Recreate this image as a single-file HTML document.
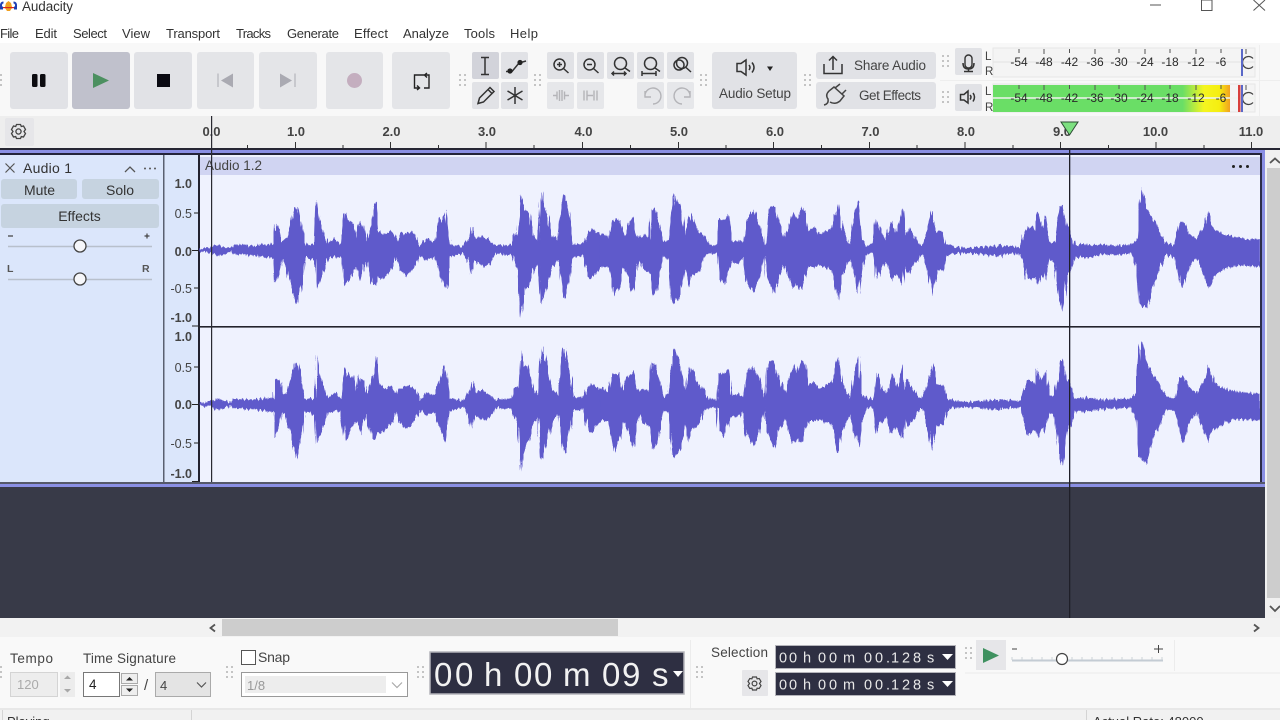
<!DOCTYPE html>
<html><head><meta charset="utf-8"><title>Audacity</title>
<style>
html,body{margin:0;padding:0;background:#fff;width:1280px;height:720px;overflow:hidden}
svg{display:block}
#root{filter:blur(.3px)}
text{font-family:"Liberation Sans",sans-serif;fill:#333}
.mn{font-size:13px;fill:#333}
.rl{font-size:13px;font-weight:bold;fill:#444;text-anchor:middle}
.m{font-size:12px;fill:#2a2a2a;text-anchor:middle}
.v{font-size:12.5px;fill:#444;text-anchor:end}
.b{font-weight:bold}
.ic{fill:none;stroke:#333;stroke-width:1.5}
.dis{fill:none;stroke:#b4b4b8;stroke-width:1.4}
.btn{fill:#e1e2e6}
.t{font-size:13.5px;fill:#444}
</style></head><body>
<svg id="root" width="1280" height="720" viewBox="0 0 1280 720" xmlns="http://www.w3.org/2000/svg">
<defs>
<filter id="jag" filterUnits="userSpaceOnUse" x="190" y="150" width="1080" height="340" color-interpolation-filters="sRGB">
<feTurbulence type="fractalNoise" baseFrequency="0.5 0.015" numOctaves="2" seed="4" result="n"/>
<feDisplacementMap in="SourceGraphic" in2="n" scale="7" xChannelSelector="G" yChannelSelector="R"/>
</filter>
<g id="grip" fill="#c4c4c4"><rect x="0" y="0" width="2" height="2"/><rect x="5" y="0" width="2" height="2"/><rect x="0" y="5" width="2" height="2"/><rect x="5" y="5" width="2" height="2"/><rect x="0" y="10" width="2" height="2"/><rect x="5" y="10" width="2" height="2"/></g>
<g id="wave" fill="#5f5acb" stroke="#5f5acb" stroke-width="2">
<polygon transform="translate(200 170) scale(.33333)" points="0,238 35,232 55,225 75,232 95,236 100,226 160,228 200,224 222,222 226,162 240,175 248,215 262,205 285,115 292,112 305,180 315,225 345,225 350,95 358,150 375,200 385,222 405,205 425,228 435,130 445,155 460,160 470,210 480,160 490,170 500,215 515,170 527,100 535,180 550,195 575,185 590,215 600,195 620,185 645,195 660,230 680,208 705,215 722,150 737,125 750,225 790,230 808,200 813,170 825,205 850,200 870,215 885,228 935,225 942,195 955,190 962,78 975,125 985,125 1000,200 1015,215 1022,100 1027,68 1040,130 1055,195 1075,215 1085,130 1092,72 1105,130 1120,222 1150,220 1165,190 1175,180 1203,195 1203,290 1175,325 1165,320 1150,255 1120,260 1105,340 1092,390 1085,350 1075,270 1055,290 1040,350 1027,405 1022,400 1015,280 1000,300 985,350 975,355 962,440 955,300 942,270 935,255 885,250 870,280 850,290 825,270 813,315 808,280 790,248 750,260 737,352 722,320 705,260 680,270 660,255 645,290 620,315 600,300 590,260 575,295 550,325 535,320 527,345 515,340 500,270 490,290 480,330 470,290 460,300 445,330 435,350 425,262 405,260 385,265 375,290 358,340 350,355 345,270 315,260 305,340 292,402 285,380 262,300 248,262 240,300 226,340 222,262 200,262 160,255 100,252 95,244 75,250 55,258 35,248 0,243"/>
<polygon transform="translate(600 170) scale(.33333)" points="0,200 10,190 25,210 35,155 42,150 58,150 70,205 85,160 100,140 110,195 118,205 130,195 150,205 158,115 168,125 178,165 190,220 205,210 215,120 222,75 240,110 255,205 265,160 272,130 285,165 300,190 312,195 325,225 352,228 358,150 375,150 385,135 395,215 415,210 430,220 440,150 460,122 475,160 495,230 502,140 510,110 522,110 535,155 555,205 570,160 580,125 592,150 605,110 615,125 625,185 640,175 660,195 695,175 715,102 725,170 750,225 760,155 775,95 785,210 800,225 820,225 830,150 845,195 860,210 875,155 890,190 907,120 915,200 925,170 950,215 965,225 985,170 995,122 1010,185 1030,185 1040,225 1060,230 1100,235 1203,228 1203,258 1100,248 1060,250 1040,260 1030,300 1010,300 995,378 985,310 965,250 950,270 925,310 915,280 907,340 890,310 875,325 860,275 845,290 830,325 820,250 800,250 785,295 775,370 760,300 750,265 725,320 715,388 695,300 660,285 640,290 625,290 615,320 605,355 592,340 580,355 570,330 555,280 535,320 522,370 510,340 502,320 495,250 475,330 460,365 440,335 430,260 415,280 395,275 385,300 375,340 358,325 352,250 325,250 312,260 300,300 285,310 272,320 265,350 255,290 240,370 222,400 215,390 205,270 190,255 178,310 168,360 158,375 150,310 130,295 118,270 110,300 100,365 85,320 70,290 58,345 42,380 35,340 25,290 10,290 0,290"/>
<polygon transform="translate(1000 170) scale(.33333)" points="0,228 60,232 72,195 85,170 105,180 112,130 125,175 135,140 148,215 165,215 180,110 188,108 200,170 210,175 225,225 260,222 300,228 395,225 410,205 418,100 425,52 440,115 460,150 480,185 500,220 525,225 540,160 548,155 565,190 590,210 610,175 625,125 640,175 670,195 720,205 780,210 780,290 720,285 670,295 640,320 625,350 610,310 590,260 565,295 548,352 540,340 525,260 500,255 480,290 460,340 440,415 425,405 418,400 410,290 395,250 300,255 260,262 225,260 210,305 200,320 188,425 180,390 165,280 148,265 135,325 125,310 112,340 105,320 85,330 72,285 60,250 0,252"/>
</g>
</defs>

<!-- title bar -->
<rect width="1280" height="720" fill="#fff"/>
<g>
<path d="M1 9V5.5Q1 2.5 3.5 2.5" fill="none" stroke="#1c3fb4" stroke-width="2"/>
<path d="M16 9V5.5Q16 2.5 13.5 2.5" fill="none" stroke="#1c3fb4" stroke-width="2"/>
<path d="M0 6.5h3v3H0zM14 6.5h3v3h-3z" fill="#1c3fb4"/>
<path d="M6 3L8.5 1L11 3L12 7H5z" fill="#f0a020"/><path d="M5 8H12L10 11H7z" fill="#f0a020"/>
<path d="M3 7H14V8.2H3z" fill="#d8261c"/>
</g>
<text x="22" y="11" font-size="13.5" style="fill:#333" textLength="51">Audacity</text>
<path d="M1150 5H1161" stroke="#555" stroke-width="1"/>
<rect x="1201.5" y="0" width="10.5" height="10.5" fill="none" stroke="#555"/>
<path d="M1253.5 0L1265 10.5M1265 0L1253.5 10.5" stroke="#555" fill="none"/>

<!-- menu -->
<g>
<text class="mn" x="0" y="38" textLength="19">File</text>
<text class="mn" x="35" y="38" textLength="22">Edit</text>
<text class="mn" x="73" y="38" textLength="34">Select</text>
<text class="mn" x="122" y="38" textLength="28">View</text>
<text class="mn" x="166" y="38" textLength="54">Transport</text>
<text class="mn" x="236" y="38" textLength="35">Tracks</text>
<text class="mn" x="287" y="38" textLength="52">Generate</text>
<text class="mn" x="354" y="38" textLength="34">Effect</text>
<text class="mn" x="403" y="38" textLength="46">Analyze</text>
<text class="mn" x="464" y="38" textLength="31">Tools</text>
<text class="mn" x="510" y="38" textLength="28">Help</text>
</g>

<!-- toolbar band -->
<rect x="0" y="43" width="1280" height="73" fill="#f8f8f8"/>
<rect x="0" y="116" width="1280" height="33" fill="#eeeeee"/>
<path d="M940 80.500H1280M1259.500 45V116" stroke="#eeeeee"/>

<!-- transport -->
<rect class="btn" x="10" y="52" width="58" height="57" rx="3"/>
<rect x="72" y="52" width="58" height="57" rx="3" fill="#c0c1cc"/>
<rect class="btn" x="134" y="52" width="58" height="57" rx="3"/>
<rect x="197" y="52" width="57" height="57" rx="3" fill="#e4e5e8"/>
<rect x="259" y="52" width="58" height="57" rx="3" fill="#e4e5e8"/>
<rect x="326" y="52" width="57" height="57" rx="3" fill="#e4e5e8"/>
<rect x="392" y="52" width="58" height="57" rx="3" fill="#e4e5e8"/>
<rect x="32" y="74" width="5.5" height="13" rx="1.5" fill="#0c0c10"/><rect x="40" y="74" width="5.5" height="13" rx="1.5" fill="#0c0c10"/>
<path d="M93 73L109 80.500L93 88z" fill="#4c9060"/>
<rect x="157" y="74" width="13" height="13" fill="#0a0a12"/>
<path d="M218 73.500V87" stroke="#aaaab2"/><path d="M233 73.500V87.500L221 80.500z" fill="#aaaab2"/>
<path d="M295 73.500V87" stroke="#aaaab2"/><path d="M280 73.500V87.500L292 80.500z" fill="#aaaab2"/>
<circle cx="354.500" cy="80.500" r="7.500" fill="#c4aebf"/>
<path d="M426 75H414.500V88H419M417 85.500L419.500 88L417 90M417 75H429V88H424M427 73L424.500 75L427 77.500" fill="none" stroke="#222" stroke-width="1.400"/>

<!-- tools -->
<rect x="472" y="52" width="27" height="27" rx="2" fill="#d2d3da"/>
<rect class="btn" x="501" y="52" width="27" height="27" rx="2"/>
<rect class="btn" x="472" y="82" width="27" height="27" rx="2"/>
<rect class="btn" x="501" y="82" width="27" height="27" rx="2"/>
<path d="M481 57.500H489M485 57.500V74.500M481 74.500H489" class="ic"/>
<path d="M506 71.500L512 71.500L519 63L526 61" class="ic" stroke-width="1.300"/><circle cx="510" cy="71" r="2.600" fill="#222"/><circle cx="520" cy="62.500" r="2.600" fill="#222"/>
<path d="M478 103.500L479.500 98L490 87.500L494 91.500L483.500 102zM488 89.500L492 93.500" class="ic"/>
<path d="M515 87V104M507.500 91L522.500 100M507.500 100L522.500 91" class="ic"/>

<!-- zoom etc -->
<g>
<rect class="btn" x="547" y="52" width="27" height="27" rx="2"/><rect class="btn" x="577" y="52" width="27" height="27" rx="2"/><rect class="btn" x="607" y="52" width="27" height="27" rx="2"/><rect class="btn" x="637" y="52" width="27" height="27" rx="2"/><rect class="btn" x="667" y="52" width="27" height="27" rx="2"/>
<rect x="547" y="82" width="27" height="27" rx="2" fill="#e6e7ea"/><rect x="577" y="82" width="27" height="27" rx="2" fill="#e6e7ea"/><rect x="637" y="82" width="27" height="27" rx="2" fill="#e6e7ea"/><rect x="667" y="82" width="27" height="27" rx="2" fill="#e6e7ea"/>
</g>
<g class="ic">
<circle cx="559.500" cy="64.500" r="5.500"/><path d="M563.500 68.500L568.500 73M557 64.500H562M559.500 62V67"/>
<circle cx="589.500" cy="64.500" r="5.500"/><path d="M593.500 68.500L598.500 73M587 64.500H592"/>
<circle cx="620.500" cy="63.500" r="6"/><path d="M625 68L630 71.500M612 73.500H626M614 71.500L612 73.500L614 75.500M624 71.500L626 73.500L624 75.500"/>
<circle cx="650.500" cy="63.500" r="6"/><path d="M655 68L660 71.500M642 73.500H656M642 71V76M656 71V76"/>
<circle cx="679" cy="65" r="5"/><circle cx="682" cy="63" r="5.500"/><path d="M686 67.500L691 72"/>
</g>
<g class="dis">
<path d="M553 95.500H557M564 95.500H569M557 91.500V99.500M559.500 90V101M562 90V101M564.500 91.500V99.500"/>
<path d="M584 90.500V100.500M587 90.500V100.500M593 95.500H587M594 90.500V100.500M597 90.500V100.500"/>
<path d="M645 97A8 8 0 1 1 653 104M645 91V97H651"/>
<path d="M690 97A8 8 0 1 0 682 104M690 91V97H684"/>
</g>

<!-- audio setup -->
<rect class="btn" x="712" y="52" width="85" height="57" rx="3"/>
<path d="M737 63.500H741L746 60V75L741 71.500H737z" class="ic"/><path d="M749 65Q751 67.500 749 70M752 62.500Q756 67.500 752 72.500" class="ic"/>
<path d="M767 66.500H773L770 71z" fill="#222"/>
<text x="719" y="98" font-size="13.500" style="fill:#444" textLength="72">Audio Setup</text>

<!-- share / effects -->
<rect class="btn" x="816" y="52" width="120" height="27" rx="3"/>
<rect class="btn" x="816" y="82" width="120" height="27" rx="3"/>
<path d="M824 64V73.500H842V64M833 70V57M829 60.500L833 56.500L837 60.500" class="ic" stroke-width="1.800"/>
<path d="M824 105Q829 104 828 99Q825 95 829 91L834 87L844 96L840 101Q835 105 830 102M835 88L840 84M842 94L846 90" class="ic" stroke-width="1.800" style="stroke:#444"/>
<text x="854" y="70" class="t" textLength="72">Share Audio</text>
<text x="859" y="100" class="t" textLength="62">Get Effects</text>

<!-- mic / speaker -->
<rect class="btn" x="955" y="48" width="27" height="27" rx="2"/>
<rect class="btn" x="955" y="84" width="27" height="27" rx="2"/>
<rect x="965" y="55" width="7" height="13" rx="3.500" fill="none" stroke="#333" stroke-width="1.400"/><path d="M963 63Q963 69 968.500 69Q974 69 974 63M968.500 69V71M964 71.500H973" class="ic" stroke-width="1.200"/>
<path d="M960.500 94.500H964L968 91V103L964 100H960.500z" class="ic" stroke-width="1.300"/><path d="M970 95Q972 97 970 99.500M973 93Q976 97 973 101.500" class="ic" stroke-width="1.300"/>

<!-- meters -->
<rect x="993" y="48" width="262" height="29" fill="#f4f4f4" stroke="#e6e6e6"/>
<rect x="993" y="84" width="262" height="28" fill="#f4f4f4" stroke="#e6e6e6"/>
<path d="M993 62H1255" stroke="#e2e2e2"/>
<defs><linearGradient id="g" x1="0" x2="1" y1="0" y2="0"><stop offset="0" stop-color="#6ade66"/><stop offset=".8" stop-color="#6ade66"/><stop offset=".89" stop-color="#f5f520"/><stop offset=".955" stop-color="#f5ee10"/><stop offset="1" stop-color="#f2a020"/></linearGradient></defs>
<rect x="993" y="85" width="237" height="27" fill="url(#g)"/>
<path d="M993 98H1255" stroke="#f0f4ee" stroke-width="1.500"/>
<text x="985" y="60" font-size="11.500" style="fill:#444">L</text><text x="985" y="75" font-size="11.500" style="fill:#444">R</text>
<text x="985" y="95" font-size="11.500" style="fill:#444">L</text><text x="985" y="111" font-size="11.500" style="fill:#444">R</text>
<g>
<text class="m" x="1019" y="66">-54</text><text class="m" x="1044" y="66">-48</text><text class="m" x="1069.500" y="66">-42</text><text class="m" x="1095" y="66">-36</text><text class="m" x="1119" y="66">-30</text><text class="m" x="1145" y="66">-24</text><text class="m" x="1170" y="66">-18</text><text class="m" x="1196" y="66">-12</text><text class="m" x="1221" y="66">-6</text>
<text class="m" x="1019" y="102">-54</text><text class="m" x="1044" y="102">-48</text><text class="m" x="1069.500" y="102">-42</text><text class="m" x="1095" y="102">-36</text><text class="m" x="1119" y="102">-30</text><text class="m" x="1145" y="102">-24</text><text class="m" x="1170" y="102">-18</text><text class="m" x="1196" y="102">-12</text><text class="m" x="1221" y="102">-6</text>
</g>
<path d="M1019 49V53M1044 49V54M1069.500 49V53M1095 49V54M1119 49V53M1145 49V54M1170 49V53M1196 49V54M1221 49V53M1246 49V54M1019 85V89M1044 85V90M1069.500 85V89M1095 85V90M1119 85V89M1145 85V90M1170 85V89M1196 85V90M1221 85V89M1246 85V90" stroke="#555"/>
<path d="M1253 58.500A6 6 0 1 0 1253 66.500M1253 94.500A6 6 0 1 0 1253 102.500" fill="none" stroke="#444" stroke-width="1.300"/>
<rect x="1241" y="49" width="2" height="27" fill="#5a68c8"/>
<rect x="1238" y="85" width="2.500" height="27" fill="#d8403c"/><rect x="1241" y="85" width="2" height="27" fill="#5a68c8"/>

<!-- ruler -->
<rect x="5" y="118" width="29" height="28" rx="2" fill="#e6e6e9"/>
<g transform="translate(18.500 131.500)" fill="none" stroke="#444" stroke-width="1.300"><circle r="2.600"/><path d="M-2 -7H2L2.800 -5L5 -5.500L7 -2L5.500 0L7 2L5 5.500L2.800 5L2 7H-2L-2.800 5L-5 5.500L-7 2L-5.500 0L-7 -2L-5 -5.500L-2.800 -5z"/></g>
<g>
<text class="rl" x="211.500" y="136">0.0</text><text class="rl" x="296" y="136">1.0</text><text class="rl" x="391.500" y="136">2.0</text><text class="rl" x="487" y="136">3.0</text><text class="rl" x="583.500" y="136">4.0</text><text class="rl" x="679" y="136">5.0</text><text class="rl" x="775" y="136">6.0</text><text class="rl" x="870.500" y="136">7.0</text><text class="rl" x="966" y="136">8.0</text><text class="rl" x="1062" y="136">9.0</text><text class="rl" x="1155.500" y="136">10.0</text><text class="rl" x="1251" y="136">11.0</text>
</g>
<path d="M295.500 142V149M390.500 142V149M486 142V149M582.500 142V149M678.500 142V149M773.500 142V149M869.500 142V149M965 142V149M1060.500 142V149M1156 142V149M1251.500 142V149M247.500 145V149M343 145V149M438.500 145V149M534 145V149M630.500 145V149M726 145V149M821.500 145V149M917 145V149M1013 145V149M1108.500 145V149M1204 145V149" stroke="#333"/>
<rect x="0" y="148" width="1280" height="2" fill="#262633"/>

<!-- track -->
<rect x="0" y="150" width="1265" height="5" fill="#8a8fe4"/>
<rect x="0" y="153" width="1265" height="2" fill="#23233a"/>
<rect x="0" y="155" width="200" height="327" fill="#dbe6fb"/>
<rect x="200" y="155" width="1060" height="327" fill="#eff2fe"/>
<rect x="200" y="157" width="1060" height="18" fill="#d0d4f2"/>
<rect x="163" y="155" width="1.500" height="327" fill="#5a6070"/>
<rect x="198" y="155" width="2" height="327" fill="#22222e"/>
<rect x="1260" y="153" width="2" height="330" fill="#2c2c48"/>
<rect x="1262" y="150" width="3" height="337" fill="#8a8fe4"/>
<text x="205" y="170" font-size="13.500" style="fill:#444" textLength="57">Audio 1.2</text>
<circle cx="1233.500" cy="166.500" r="1.500" fill="#222"/><circle cx="1240.500" cy="166.500" r="1.500" fill="#222"/><circle cx="1247.500" cy="166.500" r="1.500" fill="#222"/>

<svg x="0" y="0" width="1260" height="720"><g filter="url(#jag)"><use href="#wave"/><use href="#wave" y="154"/></g></svg>

<rect x="198" y="326" width="1062" height="1.600" fill="#23232c"/>

<!-- track panel -->
<path d="M5.500 163.500L14.500 172.500M14.500 163.500L5.500 172.500" stroke="#555" stroke-width="1.200"/>
<text x="23" y="173" font-size="14" style="fill:#333" textLength="49">Audio 1</text>
<path d="M125 172L130 167L135 172" fill="none" stroke="#555" stroke-width="1.300"/>
<circle cx="145" cy="168.500" r="1" fill="#555"/><circle cx="150" cy="168.500" r="1" fill="#555"/><circle cx="155" cy="168.500" r="1" fill="#555"/>
<rect x="1" y="179" width="76" height="20" rx="3" fill="#c6d3e0"/><rect x="82" y="179" width="77" height="20" rx="3" fill="#c6d3e0"/><rect x="1" y="204" width="158" height="24" rx="3" fill="#c6d3e0"/>
<text x="39.500" y="195" font-size="14" text-anchor="middle" style="fill:#333">Mute</text>
<text x="120" y="195" font-size="14" text-anchor="middle" style="fill:#333">Solo</text>
<text x="79.500" y="221" font-size="14" text-anchor="middle" style="fill:#333">Effects</text>
<path d="M8 236H13M144.500 236H149.500M147 233.500V238.500" stroke="#444" stroke-width="1.200"/>
<path d="M8 246.500H152M8 279.500H152" stroke="#b8c0cc" stroke-width="1.500"/>
<circle cx="80" cy="246" r="6" fill="#f6f7fa" stroke="#444" stroke-width="1.300"/><circle cx="80" cy="279" r="6" fill="#f6f7fa" stroke="#444" stroke-width="1.300"/>
<text x="7" y="272" font-size="10.500" class="b" style="fill:#555">L</text><text x="142" y="272" font-size="10.500" class="b" style="fill:#555">R</text>

<!-- v ruler -->
<g>
<text class="v b" x="192" y="188">1.0</text><text class="v" x="192" y="218">0.5</text><text class="v b" x="192" y="256">0.0</text><text class="v" x="192" y="293">-0.5</text><text class="v b" x="192" y="322">-1.0</text>
<text class="v b" x="192" y="341">1.0</text><text class="v" x="192" y="372">0.5</text><text class="v b" x="192" y="409">0.0</text><text class="v" x="192" y="448">-0.5</text><text class="v b" x="192" y="478">-1.0</text>
</g>
<path d="M194 213H198M192 250.500H198M194 288H198M194 367H198M192 404.500H198M194 443H198M192 481.500H198M192 326H198" stroke="#222"/>

<!-- lower -->
<rect x="0" y="482" width="1265" height="2" fill="#55586a"/>
<rect x="0" y="484" width="1265" height="3" fill="#8a8fe4"/>
<rect x="0" y="487" width="1265" height="131" fill="#383a48"/>
<rect x="211" y="116" width="1.200" height="366" fill="#2a2a32"/>
<rect x="1069" y="150" width="1.300" height="468" fill="#1f1f28"/>
<path d="M1061 122H1078L1069.500 135z" fill="#7ce080" stroke="#2c4c34"/>

<!-- v scrollbar -->
<rect x="1265" y="150" width="15" height="468" fill="#f0f0f0"/>
<rect x="1267" y="168" width="13" height="430" fill="#cdcdcd"/>
<path d="M1270 163L1275 158.500L1280 163M1270 606L1275 611L1280 606" fill="none" stroke="#555" stroke-width="1.800"/>

<!-- h scrollbar -->
<rect x="0" y="618" width="1280" height="19" fill="#f2f2f2"/>
<rect x="222" y="619" width="396" height="17" fill="#cdcdcd"/>
<path d="M215 624.500L210.500 628L215 631.500M1254 624.500L1258.500 628L1254 631.500" fill="none" stroke="#555" stroke-width="1.800"/>

<!-- bottom toolbar -->
<rect x="0" y="637" width="1280" height="71" fill="#f9f9f9"/>
<rect x="0" y="708" width="1280" height="2" fill="#e8e8e8"/>
<rect x="0" y="710" width="1280" height="10" fill="#f1f1f1"/>
<path d="M191.500 710V720M1086.500 710V720M2.500 710V720" stroke="#d4d4d4"/>
<text x="7" y="726" font-size="13" style="fill:#333">Playing.</text>
<text x="1093" y="726" font-size="13" style="fill:#333">Actual Rate: 48000</text>

<!-- grips -->
<use href="#grip" x="-5" y="74"/><use href="#grip" x="459" y="74"/><use href="#grip" x="534" y="74"/><use href="#grip" x="700" y="74"/><use href="#grip" x="804" y="74"/>
<use href="#grip" x="942" y="55"/><use href="#grip" x="942" y="91"/>
<use href="#grip" x="-5" y="666"/><use href="#grip" x="226" y="666"/><use href="#grip" x="417" y="666"/><use href="#grip" x="696" y="666"/><use href="#grip" x="965" y="647"/>

<text x="10" y="663" font-size="13.500" style="fill:#444" textLength="43">Tempo</text>
<text x="83" y="663" font-size="13.500" style="fill:#444" textLength="93">Time Signature</text>
<rect x="10.500" y="672.500" width="47" height="24" fill="#ededed" stroke="#d4d4d4"/>
<text x="17" y="689" font-size="13" style="fill:#aaa">120</text>
<rect x="60" y="672" width="15" height="25" fill="#ececec"/>
<path d="M64 679H71L67.500 675.500zM64 689H71L67.500 692.500z" fill="#a8a8a8"/>
<rect x="83.500" y="672.500" width="36" height="24" fill="#fff" stroke="#777"/>
<text x="89" y="689" font-size="13.500" style="fill:#222">4</text>
<rect x="121.500" y="673.500" width="16" height="10" fill="#eee" stroke="#aaa"/><rect x="121.500" y="685.500" width="16" height="10" fill="#eee" stroke="#aaa"/>
<path d="M126 680.500H133L129.500 677zM126 688.500H133L129.500 692z" fill="#222"/>
<text x="144" y="690" font-size="15" style="fill:#444">/</text>
<rect x="155.500" y="672.500" width="55" height="24" fill="#e4e4e4" stroke="#aaa"/>
<text x="160" y="690" font-size="13" style="fill:#444">4</text>
<path d="M197 682.500L201.500 687L206 682.500" fill="none" stroke="#555" stroke-width="1.200"/>
<rect x="241.500" y="650.500" width="14" height="14" fill="#fff" stroke="#555"/>
<text x="258" y="662" font-size="14" style="fill:#444" textLength="32">Snap</text>
<rect x="241.500" y="672.500" width="166" height="24" fill="#fff" stroke="#999"/>
<rect x="245" y="676" width="141" height="17" fill="#ededed"/>
<text x="247" y="690" font-size="13" style="fill:#999">1/8</text>
<path d="M392 682.500L397 687.500L402 682.500" fill="none" stroke="#aaa" stroke-width="1.200"/>

<rect x="430" y="652" width="254" height="42" fill="#2e2f42" stroke="#b4b4ba" stroke-width="1.500"/>
<text x="434 455 477 484 502 514 534 555 563 592 602 622 643 652" y="686" font-size="33" style="fill:#f2f2f2">00 h 00 m 09 s</text>
<path d="M673 671H683L678 677z" fill="#fff"/>
<path d="M690.500 640V708" stroke="#ececec"/>

<text x="711" y="657" font-size="13.500" style="fill:#444" textLength="57">Selection</text>
<rect x="742" y="670" width="26" height="26" rx="1" fill="#e6e6e9"/>
<g transform="translate(754.500 683.500)" fill="none" stroke="#444" stroke-width="1.200"><circle r="2.400"/><path d="M-2 -6.500H2L2.600 -4.700L4.700 -5L6.500 -2L5 0L6.500 2L4.700 5L2.600 4.700L2 6.500H-2L-2.600 4.700L-4.700 5L-6.500 2L-5 0L-6.500 -2L-4.700 -5L-2.600 -4.700z"/></g>
<rect x="775.500" y="645.500" width="180" height="23" fill="#2e2f42" stroke="#b4b4ba"/>
<rect x="775.500" y="672.500" width="180" height="23" fill="#2e2f42" stroke="#b4b4ba"/>
<text x="779 789 800 803 815 818 829 840 843 856 864 875 886 891 902 913 924 927" y="662.500" font-size="14.500" style="fill:#e8e8e8">00 h 00 m 00.128 s</text>
<text x="779 789 800 803 815 818 829 840 843 856 864 875 886 891 902 913 924 927" y="689.500" font-size="14.500" style="fill:#e8e8e8">00 h 00 m 00.128 s</text>
<path d="M942 654H953L947.500 660zM942 681H953L947.500 687z" fill="#fff"/>

<rect x="976" y="640" width="30" height="30" fill="#e6e6e9"/>
<path d="M983 648L999 655.500L983 663z" fill="#3f9160"/>
<path d="M1012 649H1017" stroke="#444"/><path d="M1154 649H1163M1158.500 645V653" stroke="#444"/>
<path d="M1012 660.500H1163" stroke="#c4ccd4" stroke-width="2"/>
<path d="M1012 657V660M1022 657V660M1032 657V660M1042 657V660M1052 657V660M1072 657V660M1082 657V660M1092 657V660M1102 657V660M1112 657V660M1122 657V660M1132 657V660M1142 657V660M1152 657V660M1162 657V660" stroke="#ccd2d8"/>
<circle cx="1062" cy="659" r="5.500" fill="#fff" stroke="#444" stroke-width="1.200"/>
<path d="M1174.500 640V671M965 673H1280" stroke="#ececec"/>
</svg>
</body></html>
